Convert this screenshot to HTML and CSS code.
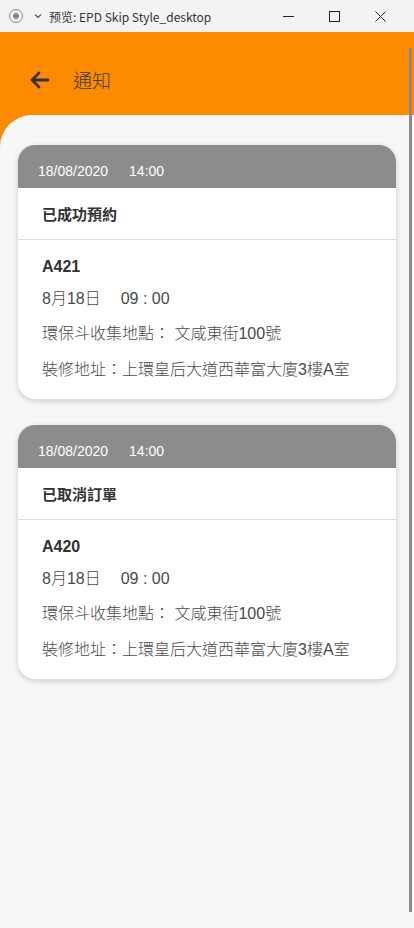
FILE: index.html
```html
<!DOCTYPE html>
<html lang="zh-Hant">
<head>
    <meta charset="UTF-8">
    <meta name="viewport" content="width=device-width, initial-scale=1.0">
    <title>通知</title>
    <link rel="stylesheet" href="styles.css">
</head>
<body>
    <div class="titlebar">
        <div class="titlebar-left">
            <span class="record-icon"><span class="record-dot"></span></span>
            <svg class="chevron" width="10" height="10" viewBox="0 0 10 10">
                <path d="M2 3.5l3 3 3-3" fill="none" stroke="#555" stroke-width="1.2"/>
            </svg>
            <span class="window-title">预览: EPD Skip Style_desktop</span>
        </div>
        <div class="window-controls">
            <svg width="46" height="32" viewBox="0 0 46 32">
                <path d="M9 16.5h11" stroke="#222" stroke-width="1"/>
            </svg>
            <svg width="46" height="32" viewBox="0 0 46 32">
                <rect x="9.5" y="11.5" width="10" height="10" fill="none" stroke="#222" stroke-width="1"/>
            </svg>
            <svg width="46" height="32" viewBox="0 0 46 32">
                <path d="M9.5 11.5l10 10M19.5 11.5l-10 10" stroke="#222" stroke-width="1"/>
            </svg>
        </div>
    </div>

    <div class="app">
        <div class="appbar">
            <button class="back-button">
                <svg width="22" height="20" viewBox="0 0 22 20">
                    <path d="M3 10h16M10 3L3 10l7 7" fill="none" stroke="#333" stroke-width="2.8" stroke-linecap="round" stroke-linejoin="round"/>
                </svg>
            </button>
            <h1>通知</h1>
        </div>

        <div class="content">
            <div class="card">
                <div class="card-header">
                    <span>18/08/2020</span>
                    <span>14:00</span>
                </div>
                <div class="card-title">已成功預約</div>
                <div class="card-body">
                    <div class="order-no">A421</div>
                    <div class="line date-line">8月18日<span class="time">09 : 00</span></div>
                    <div class="line">環保斗收集地點： 文咸東街100號</div>
                    <div class="line">裝修地址：上環皇后大道西華富大廈3樓A室</div>
                </div>
            </div>

            <div class="card">
                <div class="card-header">
                    <span>18/08/2020</span>
                    <span>14:00</span>
                </div>
                <div class="card-title">已取消訂單</div>
                <div class="card-body">
                    <div class="order-no">A420</div>
                    <div class="line date-line">8月18日<span class="time">09 : 00</span></div>
                    <div class="line">環保斗收集地點： 文咸東街100號</div>
                    <div class="line">裝修地址：上環皇后大道西華富大廈3樓A室</div>
                </div>
            </div>

            <div class="scrollbar"></div>
        </div>
    </div>
</body>
</html>
```

FILE: styles.css
```css
* {
    box-sizing: border-box;
    margin: 0;
    padding: 0;
}

body {
    width: 414px;
    height: 928px;
    overflow: hidden;
    font-family: 'Liberation Sans', Arial, 'Noto Sans CJK TC', sans-serif;
    background-color: #f7f7f7;
    color: #333;
}

.titlebar {
    height: 32px;
    display: flex;
    align-items: center;
    justify-content: space-between;
    background-color: #f3f3f3;
}

.titlebar-left {
    display: flex;
    align-items: center;
    padding-left: 9px;
}

.record-icon {
    width: 14px;
    height: 14px;
    border: 1px solid #8a8a8a;
    border-radius: 50%;
    display: flex;
    align-items: center;
    justify-content: center;
}

.record-dot {
    width: 6px;
    height: 6px;
    border-radius: 50%;
    background-color: #8a8a8a;
}

.chevron {
    margin-left: 10px;
}

.window-title {
    margin-left: 6px;
    font-family: 'Noto Sans CJK SC', 'Noto Sans', sans-serif;
    font-size: 12px;
    color: #333;
}

.window-controls {
    display: flex;
    padding-right: 2px;
}

.window-controls svg {
    display: block;
}

.app {
    height: 896px;
    display: flex;
    flex-direction: column;
    background-color: #fc8b00;
}

.appbar {
    height: 83px;
    flex-shrink: 0;
    display: flex;
    align-items: center;
    padding-left: 29px;
    padding-top: 12px;
}

.back-button {
    background: none;
    border: none;
    display: flex;
    width: 22px;
    height: 20px;
}

.appbar h1 {
    margin-left: 22px;
    font-family: 'Noto Sans CJK TC', sans-serif;
    font-size: 19px;
    font-weight: 300;
    color: #3a3a3a;
}

.content {
    position: relative;
    flex-grow: 1;
    background-color: #f7f7f7;
    border-top-left-radius: 32px;
    padding: 30px 18px 0;
    display: flex;
    flex-direction: column;
    gap: 26px;
}

.card {
    background-color: white;
    border-radius: 17px;
    overflow: hidden;
    box-shadow: 0 2px 6px rgba(0, 0, 0, 0.18);
}

.card-header {
    height: 43px;
    background-color: #8c8c8c;
    color: white;
    font-size: 14px;
    display: flex;
    align-items: center;
    gap: 21px;
    padding: 9px 20px 0;
}

.card-title {
    height: 52px;
    display: flex;
    align-items: center;
    padding: 0 24px;
    font-size: 15px;
    font-weight: 700;
    color: #333;
    border-bottom: 1px solid #d9d9d9;
}

.card-body {
    padding: 17px 24px 19px;
    font-size: 16px;
    color: #4a4a4a;
}

.order-no {
    height: 20px;
    line-height: 20px;
    font-weight: 700;
    color: #333;
}

.line {
    height: 20px;
    line-height: 20px;
    margin-top: 15px;
    font-weight: 300;
}

.date-line {
    margin-top: 12px;
}

.line:last-child {
    margin-top: 16px;
}

.time {
    margin-left: 20px;
}

.scrollbar {
    position: absolute;
    top: -67px;
    right: 2px;
    width: 3px;
    height: 864px;
    background-color: #8a8a8a;
}
```
